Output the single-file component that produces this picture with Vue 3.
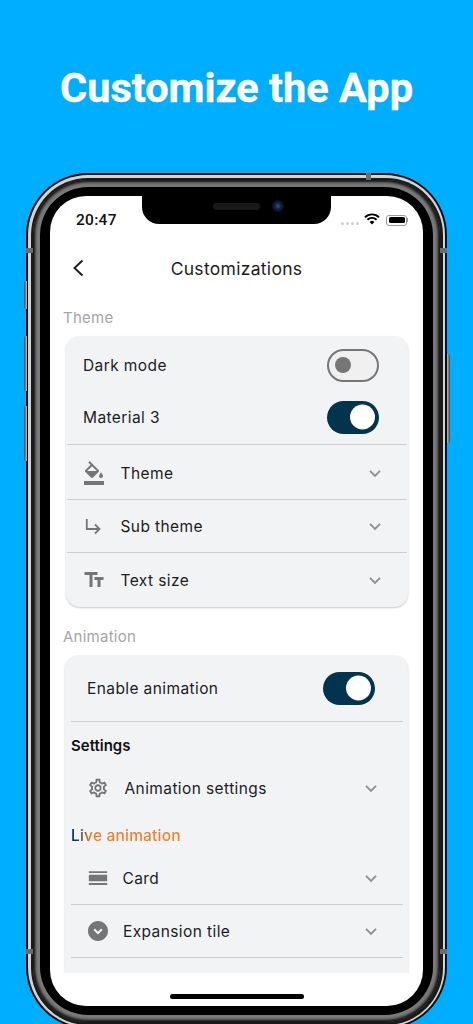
<script setup>
const chevron = 'M6 9.5l6 6 6-6'
const fill = 'M16.56 8.94L7.62 0 6.21 1.41l2.38 2.38-5.15 5.15c-.59.59-.59 1.54 0 2.12l5.5 5.5c.29.29.68.44 1.06.44s.77-.15 1.06-.44l5.5-5.5c.59-.58.59-1.53 0-2.12zM5.21 10L10 5.21 14.79 10H5.21zM19 11.5s-2 2.17-2 3.5c0 1.1.9 2 2 2s2-.9 2-2c0-1.33-2-3.5-2-3.5zM2 20h20v4H2v-4z'
const textFields = 'M2.5 4v3h5v12h3V7h5V4h-13zm19 5h-9v3h3v7h3v-7h3V9z'
const gear = 'M19.43 12.98c.04-.32.07-.64.07-.98 0-.34-.03-.66-.07-.98l2.11-1.65c.19-.15.24-.42.12-.64l-2-3.46c-.09-.16-.26-.25-.44-.25-.06 0-.12.01-.17.03l-2.49 1c-.52-.4-1.08-.73-1.69-.98l-.38-2.65C14.46 2.18 14.25 2 14 2h-4c-.25 0-.46.18-.49.42l-.38 2.65c-.61.25-1.17.59-1.69.98l-2.49-1c-.06-.02-.12-.03-.18-.03-.17 0-.34.09-.43.25l-2 3.46c-.13.22-.07.49.12.64l2.11 1.65c-.04.32-.07.65-.07.98 0 .33.03.66.07.98l-2.11 1.65c-.19.15-.24.42-.12.64l2 3.46c.09.16.26.25.44.25.06 0 .12-.01.17-.03l2.49-1c.52.4 1.08.73 1.69.98l.38 2.65c.03.24.24.42.49.42h4c.25 0 .46-.18.49-.42l.38-2.65c.61-.25 1.17-.59 1.69-.98l2.49 1c.06.02.12.03.18.03.17 0 .34-.09.43-.25l2-3.46c.12-.22.07-.49-.12-.64l-2.11-1.65zm-1.98-1.71c.04.31.05.52.05.73 0 .21-.02.43-.05.73l-.14 1.13.89.7 1.08.84-.7 1.21-1.27-.51-1.04-.42-.9.68c-.43.32-.84.56-1.25.73l-1.06.43-.16 1.13-.2 1.35h-1.4l-.19-1.35-.16-1.13-1.06-.43c-.43-.18-.83-.41-1.23-.71l-.91-.7-1.06.43-1.27.51-.7-1.21 1.08-.84.89-.7-.14-1.13c-.03-.31-.05-.54-.05-.74s.02-.43.05-.73l.14-1.13-.89-.7-1.08-.84.7-1.21 1.27.51 1.04.42.9-.68c.43-.32.84-.56 1.25-.73l1.06-.43.16-1.13.2-1.35h1.39l.19 1.35.16 1.13 1.06.43c.43.18.83.41 1.23.71l.91.7 1.06-.43 1.27-.51.7 1.21-1.07.85-.89.7.14 1.13zM12 8c-2.21 0-4 1.79-4 4s1.79 4 4 4 4-1.79 4-4-1.79-4-4-4zm0 6c-1.1 0-2-.9-2-2s.9-2 2-2 2 .9 2 2-.9 2-2 2z'
const cardBars = 'M2 4.5h20v2H2zM2 8.5h20v7H2zM2 17.5h20v2H2z'
const expand = 'M12 2C6.48 2 2 6.48 2 12s4.48 10 10 10 10-4.48 10-10S17.52 2 12 2zm0 13.5L7.5 11l1.41-1.41L12 12.67l3.09-3.08L16.5 11 12 15.5z'
</script>

<template>
  <div class="page">
    <h1 class="headline">Customize the App</h1>
    <div class="phone">
      <span class="btn btn-a"></span>
      <span class="btn btn-b"></span>
      <span class="btn btn-c"></span>
      <span class="btn btn-r"></span>
      <span class="band band-l"></span>
      <span class="band band-r"></span>
      <span class="band band-bl"></span>
      <span class="band band-br"></span>
      <span class="band-top"></span>
      <div class="ring-light">
        <div class="ring-dark">
          <div class="ring-gray">
            <div class="bezel">
              <div class="screen">
                <div class="notch">
                  <span class="speaker"></span>
                  <span class="camera"></span>
                </div>

                <div class="status">
                  <span class="time">20:47</span>
                  <div class="status-right">
                    <span class="signal"><i></i><i></i><i></i><i></i></span>
                    <svg class="wifi" viewBox="0 0 16 12">
                      <path d="M1 4.2a10 10 0 0 1 14 0M3.4 6.7a6.6 6.6 0 0 1 9.2 0" fill="none" stroke="#000" stroke-width="1.9" />
                      <path d="M5.6 8.9a3.4 3.4 0 0 1 4.8 0L8 11.5z" fill="#000" />
                    </svg>
                    <span class="battery"><b></b></span>
                    <span class="battery-tip"></span>
                  </div>
                </div>

                <header class="appbar">
                  <svg class="back" viewBox="0 0 12 18">
                    <path d="M10.5 1.5L2.5 9l8 7.5" fill="none" stroke="#1c1c1e" stroke-width="1.9" />
                  </svg>
                  <span class="appbar-title">Customizations</span>
                </header>

                <div class="scroll">
                  <div class="label label-theme">Theme</div>
                  <section class="card card-one">
                    <div class="toggle-row">
                      <span class="txt">Dark mode</span>
                      <span class="switch off"><i></i></span>
                    </div>
                    <div class="toggle-row">
                      <span class="txt">Material 3</span>
                      <span class="switch on"><i></i></span>
                    </div>
                    <div class="divider divider-first"></div>
                    <div class="row row-first">
                      <svg class="ico" viewBox="0 0 24 24"><path :d="fill" /></svg>
                      <span class="txt grow">Theme</span>
                      <svg class="chev" viewBox="0 0 24 24"><path :d="chevron" /></svg>
                    </div>
                    <div class="divider"></div>
                    <div class="row">
                      <svg class="ico" viewBox="0 0 24 24">
                        <path class="thin" d="M4.8 5V15H17.5M13 10.5L17.5 15L13 19.5" />
                      </svg>
                      <span class="txt grow">Sub theme</span>
                      <svg class="chev" viewBox="0 0 24 24"><path :d="chevron" /></svg>
                    </div>
                    <div class="divider"></div>
                    <div class="row row-last">
                      <svg class="ico" viewBox="0 0 24 24"><path :d="textFields" /></svg>
                      <span class="txt grow">Text size</span>
                      <svg class="chev" viewBox="0 0 24 24"><path :d="chevron" /></svg>
                    </div>
                  </section>

                  <div class="label label-anim">Animation</div>
                  <section class="card card-two">
                    <div class="toggle-row">
                      <span class="txt">Enable animation</span>
                      <span class="switch on"><i></i></span>
                    </div>
                    <div class="divider divider-enable"></div>
                    <div class="heading heading-settings">Settings</div>
                    <div class="row row-gear">
                      <svg class="ico ico-small" viewBox="0 0 24 24"><path :d="gear" /></svg>
                      <span class="txt grow">Animation settings</span>
                      <svg class="chev" viewBox="0 0 24 24"><path :d="chevron" /></svg>
                    </div>
                    <div class="heading heading-live"><span class="live">Live animation</span></div>
                    <div class="row row-tight">
                      <svg class="ico ico-small" viewBox="0 0 24 24"><path :d="cardBars" /></svg>
                      <span class="txt grow">Card</span>
                      <svg class="chev" viewBox="0 0 24 24"><path :d="chevron" /></svg>
                    </div>
                    <div class="divider"></div>
                    <div class="row row-tight">
                      <svg class="ico" viewBox="0 0 24 24"><path :d="expand" /></svg>
                      <span class="txt grow">Expansion tile</span>
                      <svg class="chev" viewBox="0 0 24 24"><path :d="chevron" /></svg>
                    </div>
                    <div class="divider"></div>
                    <div class="card-rest"></div>
                  </section>
                </div>

                <div class="home-area"><span class="home"></span></div>
              </div>
            </div>
          </div>
        </div>
      </div>
    </div>
  </div>
</template>

<style>
html, body { margin: 0; padding: 0; background: #00aeff; }
</style>

<style scoped>
.page {
  width: 473px;
  height: 1024px;
  overflow: hidden;
  background: #00aeff;
  display: flex;
  flex-direction: column;
  font-family: Inter, "Open Sans", sans-serif;
}
.headline {
  margin: 0;
  height: 173px;
  flex: none;
  box-sizing: border-box;
  padding-top: 63px;
  font: 700 41.5px/50px Roboto, sans-serif;
  color: #fff;
  text-align: center;
  -webkit-text-stroke: .4px #fff;
}
.phone {
  position: relative;
  flex: none;
  width: 421px;
  margin-left: 26px;
  box-sizing: border-box;
  padding: 2px;
  border-radius: 62px;
  background: #0c0c0c;
}
.btn { position: absolute; width: 3px; background: linear-gradient(90deg, #444, #bbb); }
.btn-a { left: -2px; top: 108px; height: 28px; border-radius: 2px 0 0 2px; }
.btn-b { left: -2px; top: 163px; height: 55px; border-radius: 2px 0 0 2px; }
.btn-c { left: -2px; top: 233px; height: 55px; border-radius: 2px 0 0 2px; }
.btn-r { right: -3px; top: 181px; height: 89px; border-radius: 0 2px 2px 0; background: linear-gradient(90deg, #bbb, #444); }
.band { position: absolute; z-index: 2; width: 7px; height: 5px; background: #6d6d6d; }
.band-l { left: 0; top: 75px; }
.band-r { right: 0; top: 75px; }
.band-bl { left: 0; top: 776px; }
.band-br { right: 0; top: 776px; }
.band-top { position: absolute; z-index: 2; left: 340px; top: 0; width: 5px; height: 7px; background: #6d6d6d; }

.ring-light { padding: 2.5px; border-radius: 60px; background: #d4d4d4; }
.ring-dark { padding: 2.5px; border-radius: 57px; background: #1a1a1a; }
.ring-gray {
  padding: 7px;
  border-radius: 55px;
  background: #7a7a7a;
  box-shadow: inset 0 0 3px 2px #0a0a0a;
}
.bezel { padding: 9px 10px; border-radius: 48px; background: #000; }
.screen {
  position: relative;
  height: 810px;
  border-radius: 36px;
  background: #fff;
  overflow: hidden;
  display: flex;
  flex-direction: column;
}

.notch {
  position: absolute;
  left: 92px;
  top: 0;
  width: 189px;
  height: 28px;
  background: #000;
  border-radius: 0 0 17px 17px;
}
.speaker {
  position: absolute;
  left: 71px;
  top: 7px;
  width: 47px;
  height: 7px;
  border-radius: 4px;
  background: #191919;
}
.camera {
  position: absolute;
  left: 130px;
  top: 4px;
  width: 12px;
  height: 12px;
  border-radius: 50%;
  background: radial-gradient(circle, #2a5a9e 0, #10233f 35%, #0b0f18 70%);
}

.status {
  flex: none;
  height: 48px;
  display: flex;
  justify-content: space-between;
  box-sizing: border-box;
  padding: 14px 15px 0 26px;
}
.time { font: 500 15.5px/20px Roboto, Inter, sans-serif; letter-spacing: .3px; color: #111; }
.status-right { display: flex; align-items: center; height: 20px; }
.signal { display: flex; gap: 2px; margin-top: 6px; margin-right: 5px; }
.signal i { width: 3px; height: 3px; border-radius: 50%; background: #cfcfcf; }
.wifi { width: 16px; height: 12px; margin-right: 6px; margin-top: -3px; }
.battery {
  box-sizing: border-box;
  width: 21px;
  height: 11px;
  padding: 1.5px;
  border: 1px solid #9a9a9a;
  border-radius: 3px;
  display: flex;
}
.battery b { flex: 1; background: #000; border-radius: 1.5px; }
.battery-tip { width: 1px; height: 4px; background: #9a9a9a; }

.appbar {
  position: relative;
  flex: none;
  height: 48px;
  display: flex;
  align-items: center;
  justify-content: center;
}
.back { position: absolute; left: 22px; top: 15px; width: 12px; height: 18px; }
.appbar-title { font-size: 17.5px; color: #1c1c1e; letter-spacing: .3px; }

.scroll { flex: none; height: 681px; overflow: hidden; }
.label { height: 24px; line-height: 25px; margin-left: 13px; font-size: 15px; letter-spacing: .25px; color: #a5a5a5; }
.label-theme { margin-top: 13px; }
.label-anim { margin-top: 17px; }

.card {
  border-radius: 14px;
  background: #f2f3f5;
  box-shadow: 0 1px 2px rgba(0, 0, 0, .22);
}
.card-one { margin: 6.5px 15px 0 15.5px; padding: 3.5px 1.5px 0; }
.card-two { margin: 7px 15px 0; padding: 7px 5px 0 6px; }
.card-rest { height: 40px; }

.toggle-row {
  height: 52px;
  display: flex;
  align-items: center;
  justify-content: space-between;
  padding: 0 28px 0 16px;
}
.txt { font-size: 15.5px; letter-spacing: .4px; color: #1c1c1e; }
.grow { flex: 1; }
.switch {
  position: relative;
  box-sizing: border-box;
  width: 52px;
  height: 33px;
  border-radius: 17px;
}
.switch i { position: absolute; top: 50%; transform: translateY(-50%); border-radius: 50%; }
.switch.off { background: #f0f0f0; border: 2px solid #767676; }
.switch.off i { left: 6px; width: 16px; height: 16px; background: #767676; }
.switch.on { background: #02344f; }
.switch.on i { left: 23px; width: 25px; height: 25px; background: #fff; }

.divider { height: 1px; background: #cdcdd0; }
.divider-first { margin-top: 1px; }
.divider-enable { margin-top: 7px; }

.row {
  height: 52px;
  display: flex;
  align-items: center;
  padding: 0 22px 0 15px;
}
.row-first { height: 54px; box-sizing: border-box; padding-top: 2px; }
.row-last { height: 54px; }
.row-gear { padding-left: 14.5px; }
.row-tight { padding-left: 14.5px; }
.ico { flex: none; width: 24px; height: 24px; margin-right: 14.5px; fill: #757575; }
.ico-small { width: 22px; height: 22px; margin: 0 16px 0 1px; }
.row-tight .ico { margin-right: 13.5px; }
.row-tight .ico-small { margin: 0 14px 0 1px; }
.thin { fill: none; stroke: #757575; stroke-width: 1.8; }
.chev { flex: none; width: 20px; height: 20px; fill: none; stroke: #8e8e8e; stroke-width: 2.2; }

.heading { height: 24px; line-height: 24px; font-size: 15px; font-weight: 600; color: #111; }
.heading-settings { margin-top: 12px; margin-bottom: 4px; }
.heading-live { margin-top: 10px; margin-bottom: 4px; }
.live {
  font-size: 15.5px;
  letter-spacing: .2px;
  font-weight: 500;
  background: linear-gradient(90deg, #06324e 0, #06324e 5px, #f47a25 20px, #f57f2a 100%);
  -webkit-background-clip: text;
  background-clip: text;
  color: transparent;
}

.home-area { flex: 1; display: flex; justify-content: center; align-items: flex-end; padding-bottom: 7px; }
.home { width: 134px; height: 5px; border-radius: 3px; background: #000; }
</style>
